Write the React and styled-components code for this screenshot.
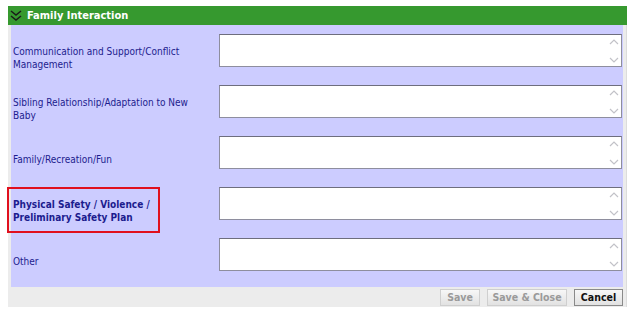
import React from "react";
import styled, { createGlobalStyle } from "styled-components";

const Global = createGlobalStyle`
  html, body { margin: 0; padding: 0; background: #ffffff; }
  body { font-family: "DejaVu Sans Condensed", "DejaVu Sans", Verdana, sans-serif; }
`;

const Page = styled.div`
  padding: 6px 2px 0 8px;
  width: 619px;
`;

const Header = styled.div`
  height: 19px;
  background: #36992f;
  display: flex;
  align-items: center;
  gap: 5px;
  padding-left: 2px;
  color: #ffffff;
  font-weight: bold;
  font-size: 11px;
`;

const Body = styled.div`
  background: #ececec;
  padding: 0 3px 0 3px;
  border-right: 1px solid #dcdcdc;
`;

const Panel = styled.div`
  background: #ccccff;
  padding: 7px 0 0 0;
`;

const Row = styled.div`
  height: 51px;
  display: flex;
  align-items: center;
`;

const Label = styled.div`
  width: 208px;
  padding-left: 2px;
  box-sizing: border-box;
  font-size: 10px;
  line-height: 13px;
  color: #1c1c8e;
  font-weight: ${(p) => (p.$bold ? "bold" : "normal")};
  position: relative;
`;

const Highlight = styled.div`
  position: absolute;
  left: -4px;
  top: -11px;
  width: 149px;
  height: 42px;
  border: 2px solid #e0101e;
`;

const Field = styled.div`
  flex: 1;
  margin-right: 1px;
  height: 33px;
  margin-bottom: 14px;
  background: #ffffff;
  border: 1px solid #8e8e9e;
  border-top-color: #6e6e7e;
  box-sizing: border-box;
  display: flex;
  justify-content: flex-end;
`;

const Scroll = styled.div`
  width: 14px;
  display: flex;
  flex-direction: column;
  justify-content: space-between;
  align-items: center;
  padding: 4px 0 3px;
`;

const Footer = styled.div`
  height: 20px;
  display: flex;
  justify-content: flex-end;
  align-items: center;
  gap: 7px;
`;

const Button = styled.button`
  height: 17px;
  width: ${(p) => p.$w}px;
  padding: 0;
  font-family: "DejaVu Sans Condensed", "DejaVu Sans", sans-serif;
  font-size: 10.5px;
  font-weight: bold;
  color: ${(p) => (p.$disabled ? "#9a9a9a" : "#111111")};
  background: linear-gradient(#f7f7f7, #e2e2e2);
  border: 1px solid ${(p) => (p.$disabled ? "#cfcfcf" : "#8a8a8a")};
  border-radius: 0;
  line-height: 14px;
  cursor: default;
`;

const Chevron = ({ up }) => (
  <svg width="10" height="6" viewBox="0 0 10 6">
    <path
      d={up ? "M1 5 L5 1 L9 5" : "M1 1 L5 5 L9 1"}
      fill="none"
      stroke="#c2c2c8"
      strokeWidth="1.2"
    />
  </svg>
);

const HeaderIcon = () => (
  <svg width="12" height="12" viewBox="0 0 12 12">
    <path d="M1 1 L6 5 L11 1" fill="none" stroke="#1a1a1a" strokeWidth="1.5" />
    <path d="M1 6 L6 10 L11 6" fill="none" stroke="#1a1a1a" strokeWidth="1.5" />
  </svg>
);

const rows = [
  { label: ["Communication and Support/Conflict", "Management"] },
  { label: ["Sibling Relationship/Adaptation to New", "Baby"] },
  { label: ["Family/Recreation/Fun"] },
  { label: ["Physical Safety / Violence /", "Preliminary Safety Plan"], bold: true },
  { label: ["Other"] },
];

export default function App() {
  return (
    <>
      <Global />
      <Page>
        <Header>
          <HeaderIcon />
          <span>Family Interaction</span>
        </Header>
        <Body>
          <Panel>
            {rows.map((r, i) => (
              <Row key={i}>
                <Label $bold={r.bold}>
                  {r.bold && <Highlight />}
                  {r.label.map((l, j) => (
                    <div key={j}>{l}</div>
                  ))}
                </Label>
                <Field>
                  <Scroll>
                    <Chevron up />
                    <Chevron />
                  </Scroll>
                </Field>
              </Row>
            ))}
          </Panel>
          <Footer>
            <Button $disabled $w={40}>Save</Button>
            <Button $disabled $w={80}>Save &amp; Close</Button>
            <Button $w={49}>Cancel</Button>
          </Footer>
        </Body>
      </Page>
    </>
  );
}
